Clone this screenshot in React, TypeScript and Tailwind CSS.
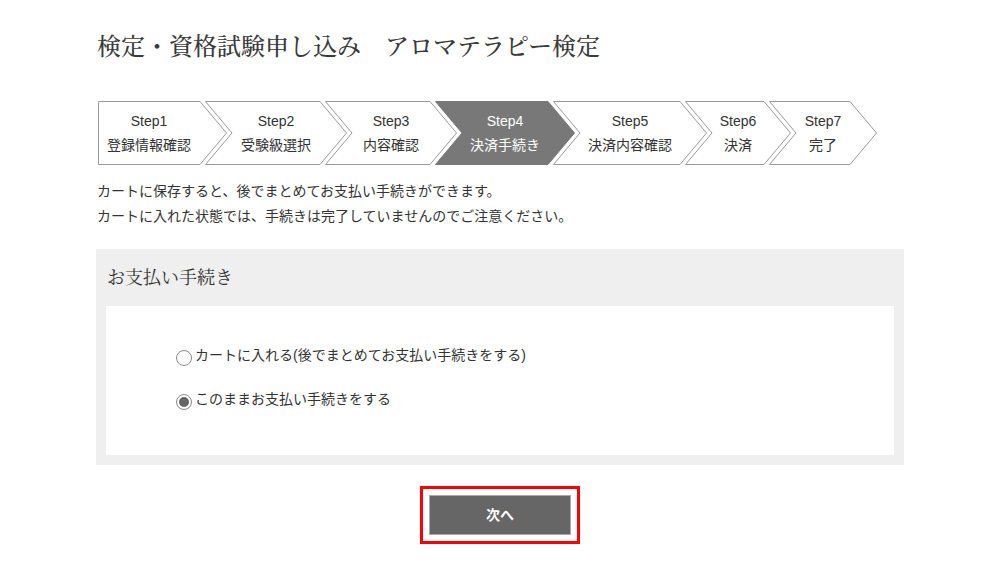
const steps = [
  { label: "Step1", name: "登録情報確認", w: 102 },
  { label: "Step2", name: "受験級選択", w: 115 },
  { label: "Step3", name: "内容確認", w: 105 },
  { label: "Step4", name: "決済手続き", w: 113, active: true },
  { label: "Step5", name: "決済内容確認", w: 127 },
  { label: "Step6", name: "決済", w: 79 },
  { label: "Step7", name: "完了", w: 81 },
];

const D = 27; // chevron depth
const H = 64;

const sans = "font-['Liberation_Sans','Noto_Sans_CJK_JP',sans-serif]";
const serif = "font-['Noto_Serif_CJK_JP','Noto_Sans_CJK_JP',serif]";

const StepBar = () => (
  <div className="flex ml-[2px] mt-[38px]">
    {steps.map((s, i) => {
      const W = s.w + D;
      const pts =
        i === 0
          ? `0.5,0.5 ${s.w},0.5 ${W - 0.5},${H / 2} ${s.w},${H - 0.5} 0.5,${H - 0.5}`
          : `0.5,0.5 ${s.w},0.5 ${W - 0.5},${H / 2} ${s.w},${H - 0.5} 0.5,${H - 0.5} ${D},${H / 2}`;
      return (
        <div
          key={s.label}
          className={`grid h-[64px] shrink-0 ${i > 0 ? "ml-[-22px]" : ""}`}
          style={{ width: W }}
        >
          <svg className="[grid-area:1/1]" width={W} height={H} viewBox={`0 0 ${W} ${H}`}>
            <polygon
              points={pts}
              fill={s.active ? "#787878" : "#fff"}
              stroke={s.active ? "#787878" : "#9a9a9a"}
              strokeWidth={1}
            />
          </svg>
          <div
            className={`[grid-area:1/1] flex flex-col items-center justify-center text-[14px] leading-[24px] ${
              s.active ? "text-white" : "text-[#333]"
            }`}
            style={{ width: i === 0 ? s.w : W }}
          >
            <span>{s.label}</span>
            <span>{s.name}</span>
          </div>
        </div>
      );
    })}
  </div>
);

const Radio = ({ checked, label }: { checked?: boolean; label: string }) => (
  <label className="flex items-start gap-[3px] h-[24px] leading-[24px] text-[14px] text-[#333]">
    <span className="mt-[7px] w-[16px] h-[16px] rounded-full border border-[#888] bg-white flex items-center justify-center shrink-0">
      {checked && <span className="w-[10px] h-[10px] rounded-full bg-[#666]" />}
    </span>
    <span>{label}</span>
  </label>
);

export default function App() {
  return (
    <div className={`min-h-[566px] bg-white ${sans}`}>
      <div className="w-[808px] mx-auto pt-[27px]">
        <h1 className={`${serif} text-[24px] leading-[36px] text-[#3a3a3a] font-medium ml-[1px]`}>
          検定・資格試験申し込み　アロマテラピー検定
        </h1>

        <StepBar />

        <div className="mt-[14px] ml-[1px] text-[14px] leading-[25px] text-[#333]">
          <p>カートに保存すると、後でまとめてお支払い手続きができます。</p>
          <p>カートに入れた状態では、手続きは完了していませんのでご注意ください。</p>
        </div>

        <div className="mt-[20px] bg-[#efefef] px-[10px] pb-[10px]">
          <h2 className={`${serif} pt-[13px] pb-[16px] ml-[1px] text-[18px] leading-[28px] text-[#333]`}>
            お支払い手続き
          </h2>
          <div className="bg-white pl-[70px] pt-[37px] pb-[44px] flex flex-col gap-[20px]">
            <Radio label="カートに入れる(後でまとめてお支払い手続きをする)" />
            <Radio checked label="このままお支払い手続きをする" />
          </div>
        </div>

        <div className="flex justify-center mt-[21px]">
          <div className="border-[3px] border-[#ff0000] p-[6px]">
            <button className="w-[142px] h-[40px] bg-[#666] border border-[#aaa] text-white text-[14px] font-bold">
              次へ
            </button>
          </div>
        </div>
      </div>
    </div>
  );
}
